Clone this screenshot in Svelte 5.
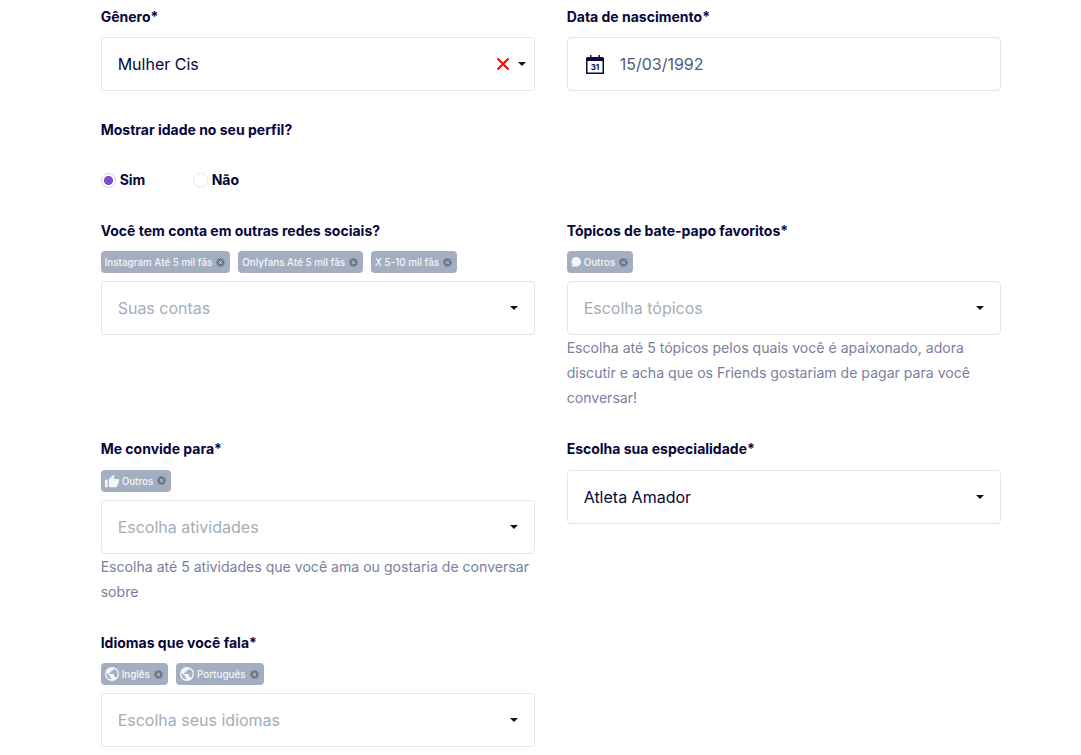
<script>
  const chipsLeft = [
    { text: "Instagram Até 5 mil fãs" },
    { text: "Onlyfans Até 5 mil fãs" },
    { text: "X 5-10 mil fãs" }
  ];
</script>

{#snippet remove()}
  <svg class="chip__x" viewBox="0 0 10 10"><circle cx="5" cy="5" r="4.700" fill="#6f7a8e"/><path d="M3.500 3.500l3 3M6.500 3.500l-3 3" stroke="#e4e7ec" stroke-width="1" fill="none"/></svg>
{/snippet}

{#snippet caret()}
  <span class="caret"></span>
{/snippet}

{#snippet globe()}
  <svg class="chip__icon" viewBox="2 2 20 20"><path fill="currentColor" d="M12 2a10 10 0 1 0 0 20 10 10 0 0 0 0-20zm-1 17.900A8 8 0 0 1 4.200 10.200L9 15v1c0 1.100.9 2 2 2v1.900zm6.900-2.500c-.3-.8-1-1.400-1.900-1.400h-1v-3c0-.6-.4-1-1-1H8v-2h2c.6 0 1-.4 1-1V7h2c1.100 0 2-.9 2-2v-.4a8 8 0 0 1 2.900 12.800z"/></svg>
{/snippet}

<main class="form">
  <div class="col">
    <label class="label">Gênero*</label>
    <div class="select select--clearable">
      <span class="value">Mulher Cis</span>
      <svg class="clear" viewBox="0 0 14 14"><path d="M1.500 1.500l11 11M12.500 1.500l-11 11" stroke="#f00" stroke-width="2" fill="none"/></svg>
      {@render caret()}
    </div>
  </div>
  <div class="col">
    <label class="label">Data de nascimento*</label>
    <div class="select select--date">
      <svg class="cal" viewBox="0 0 18 19">
        <path fill="#0a0a3c" d="M4 0h1.500v2h7V0H14v2h2.500A1.500 1.500 0 0 1 18 3.500V19H0V3.500A1.500 1.500 0 0 1 1.500 2H4z"/>
        <rect x="1.500" y="6" width="15" height="11.500" fill="#fff"/>
        <text x="9" y="15" text-anchor="middle" class="cal__num">31</text>
      </svg>
      <span class="value value--date">15/03/1992</span>
    </div>
  </div>

  <div class="full">
    <label class="label">Mostrar idade no seu perfil?</label>
    <div class="radios">
      <span class="radio"><span class="radio__dot radio__dot--on"></span>Sim</span>
      <span class="radio"><span class="radio__dot"></span>Não</span>
    </div>
  </div>

  <div class="col">
    <label class="label">Você tem conta em outras redes sociais?</label>
    <div class="chips">
      {#each chipsLeft as chip}
        <span class="chip">{chip.text}{@render remove()}</span>
      {/each}
    </div>
    <div class="select"><span class="value value--ph">Suas contas</span>{@render caret()}</div>
  </div>
  <div class="col">
    <label class="label">Tópicos de bate-papo favoritos*</label>
    <div class="chips">
      <span class="chip"><svg class="chip__icon chip__icon--bubble" viewBox="0 0 20 20"><path fill="currentColor" d="M10.500 0C5 0 1 3.900 1 9c0 2.300.8 4.400 2.200 6L1 20l5.300-1.500c1.300.6 2.700.9 4.200.9 5.200 0 9.500-4.300 9.500-9.700S15.700 0 10.500 0z"/></svg>Outros{@render remove()}</span>
    </div>
    <div class="select"><span class="value value--ph">Escolha tópicos</span>{@render caret()}</div>
    <p class="hint">Escolha até 5 tópicos pelos quais você é apaixonado, adora discutir e acha que os Friends gostariam de pagar para você conversar!</p>
  </div>

  <div class="col">
    <label class="label">Me convide para*</label>
    <div class="chips">
      <span class="chip"><svg class="chip__icon" viewBox="1 1 22 20"><path fill="currentColor" d="M1 21h4V9H1v12zm22-11a2 2 0 0 0-2-2h-6.300l1-4.600v-.3c0-.4-.2-.8-.4-1.100L14.200 1 7.600 7.600C7.200 8 7 8.500 7 9v10c0 1.100.9 2 2 2h9c.8 0 1.500-.5 1.800-1.200l3-7.100c.1-.2.2-.5.2-.7v-2z"/></svg>Outros{@render remove()}</span>
    </div>
    <div class="select"><span class="value value--ph">Escolha atividades</span>{@render caret()}</div>
    <p class="hint">Escolha até 5 atividades que você ama ou gostaria de conversar sobre</p>
  </div>
  <div class="col">
    <label class="label">Escolha sua especialidade*</label>
    <div class="select"><span class="value">Atleta Amador</span>{@render caret()}</div>
  </div>

  <div class="col col--last">
    <label class="label">Idiomas que você fala*</label>
    <div class="chips">
      <span class="chip">{@render globe()}Inglês{@render remove()}</span>
      <span class="chip">{@render globe()}Português{@render remove()}</span>
    </div>
    <div class="select"><span class="value value--ph">Escolha seus idiomas</span>{@render caret()}</div>
  </div>
</main>

<style>
  :global(body) {
    background: #fff;
    font-family: Inter, "Liberation Sans", sans-serif;
    overflow: hidden;
  }

  .form {
    width: 900px;
    margin-left: 100.67px;
    display: grid;
    grid-template-columns: 434px 434px;
    column-gap: 32px;
    align-items: start;
    padding-top: 8px;
  }

  .col {
    display: flex;
    flex-direction: column;
    padding-bottom: 29.700px;
  }

  .col--last {
    margin-top: 0.300px;
  }

  .full {
    grid-column: 1 / -1;
    display: flex;
    flex-direction: column;
    padding-bottom: 33.700px;
  }

  .label {
    display: block;
    font-size: 14px;
    line-height: 18px;
    font-weight: 700;
    color: #07073b;
    margin-bottom: 11.300px;
  }

  .select {
    height: 54px;
    box-sizing: border-box;
    border: 1px solid #e1e5f0;
    border-radius: 4px;
    display: flex;
    align-items: center;
    padding: 0 16px;
    background: #fff;
  }

  .select--clearable {
    padding-right: 8px;
  }

  .select--date {
    padding-left: 18px;
  }

  .value {
    flex: 1;
    font-size: 16px;
    color: #07073b;
  }

  .value--ph {
    color: #a2adba;
  }

  .value--date {
    color: #4f5b76;
    margin-left: 16px;
  }

  .clear {
    width: 14px;
    height: 14px;
    margin-right: 8px;
  }

  .caret {
    width: 0;
    height: 0;
    border-left: 4px solid transparent;
    border-right: 4px solid transparent;
    border-top: 4px solid #111;
  }

  .cal {
    width: 18px;
    height: 19px;
  }

  .cal__num {
    font-size: 8px;
    font-weight: 700;
    fill: #0a0a3c;
  }

  .radios {
    display: flex;
    margin-top: 20px;
    height: 18px;
    align-items: center;
  }

  .radio {
    width: 92px;
    display: flex;
    align-items: center;
    font-size: 14px;
    font-weight: 700;
    color: #07073b;
  }

  .radio__dot {
    width: 13px;
    height: 13px;
    margin-top: 2px;
    border: 1px solid #e1e5f0;
    border-radius: 50%;
    margin-right: 4px;
    box-sizing: content-box;
  }

  .radio__dot--on {
    border-color: #d9cff0;
    background: radial-gradient(circle, #7e4fd0 0 4.200px, #fff 4.800px);
  }

  .chips {
    display: flex;
    gap: 8px;
    margin-bottom: 8px;
  }

  .chip {
    display: inline-flex;
    align-items: center;
    height: 22px;
    padding: 0 5px 0 4px;
    background: #a3aec0;
    color: #f4f5f8;
    border-radius: 4px;
    font-size: 9.850px;
    font-weight: 500;
  }

  .chip__icon {
    width: 14px;
    height: 14px;
    margin-right: 3px;
  }

  .chip__icon--bubble {
    width: 10px;
    height: 10px;
  }

  .chip__x {
    width: 9px;
    height: 9px;
    margin-left: 4px;
  }

  .hint {
    margin: 0;
    font-size: 14.080px;
    line-height: 25.100px;
    color: #7a7f9e;
  }
</style>
